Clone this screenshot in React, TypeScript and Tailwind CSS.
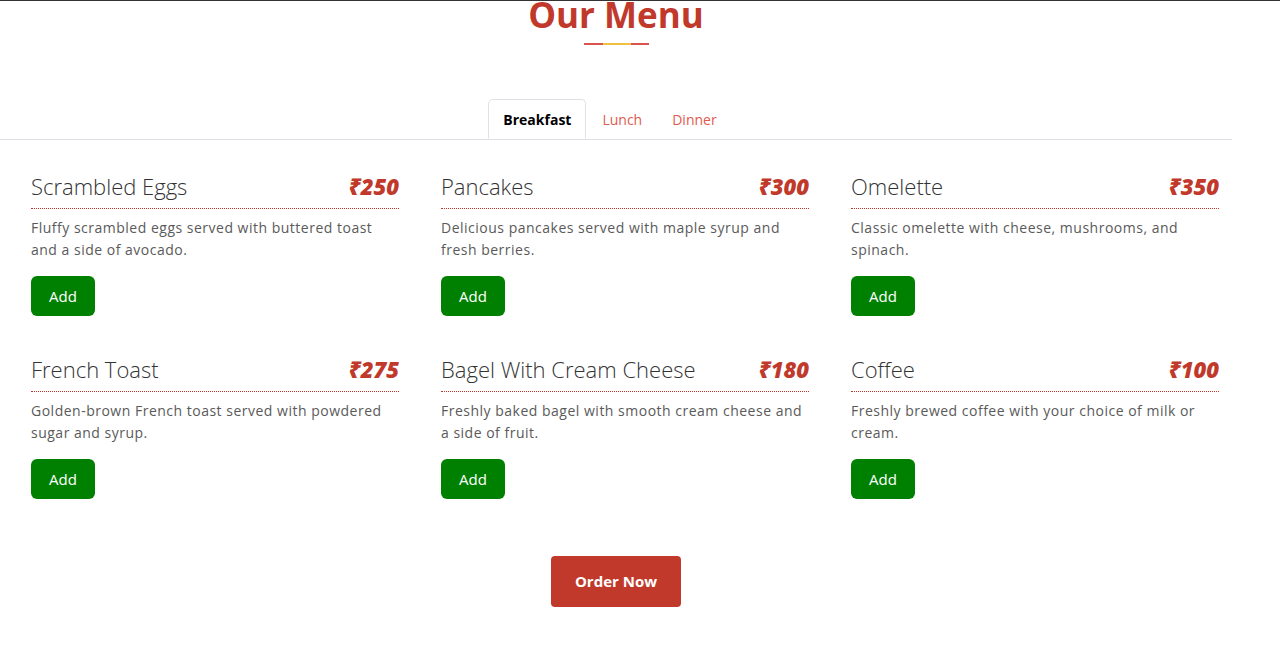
const items = [
  { name: "Scrambled Eggs", price: 250, desc: "Fluffy scrambled eggs served with buttered toast and a side of avocado." },
  { name: "Pancakes", price: 300, desc: "Delicious pancakes served with maple syrup and fresh berries." },
  { name: "Omelette", price: 350, desc: "Classic omelette with cheese, mushrooms, and spinach." },
  { name: "French Toast", price: 275, desc: "Golden-brown French toast served with powdered sugar and syrup." },
  { name: "Bagel With Cream Cheese", price: 180, desc: "Freshly baked bagel with smooth cream cheese and a side of fruit." },
  { name: "Coffee", price: 100, desc: "Freshly brewed coffee with your choice of milk or cream." },
];

function MenuItem({ name, price, desc }: { name: string; price: number; desc: string }) {
  return (
    <div className="flex flex-col">
      <div className="flex items-end justify-between border-b border-dotted border-[#c0392b] pb-[6px]">
        <h3 className="font-['Open_Sans',sans-serif] text-[22px] font-light leading-[32px] text-[#333]">{name}</h3>
        <span className="font-['Noto_Sans',sans-serif] text-[22px] font-black italic leading-[32px] text-[#c0392b]">
          ₹{price}
        </span>
      </div>
      <p className="mt-[8px] font-['Open_Sans',sans-serif] text-[14px] leading-[22px] tracking-[0.5px] text-[#5a5a5a]">
        {desc}
      </p>
      <div className="mt-[15px]">
        <button className="h-[40px] w-[64px] rounded-[6px] bg-[#008000] font-['Open_Sans',sans-serif] text-[15px] text-white">
          Add
        </button>
      </div>
    </div>
  );
}

export default function App() {
  return (
    <div className="min-h-[669px] w-[1280px] border-t border-[#333] bg-white">
      <div className="w-[1232px]">
        {/* Heading */}
        <div className="flex flex-col items-center">
          <h1 className="mt-[-8px] font-['Open_Sans',sans-serif] text-[35px] font-bold leading-[44px] text-[#c0392b]">
            Our Menu
          </h1>
          <div className="mt-[6px] flex h-[2px] w-[65px]">
            <div className="w-[19px] bg-[#d9534f]" />
            <div className="w-[28px] bg-[#f0c040]" />
            <div className="w-[18px] bg-[#d9534f]" />
          </div>
        </div>

        {/* Tabs */}
        <div className="mt-[54px] flex justify-center border-b border-[#dee2e6] pr-[13px]">
          <button className="-mb-px h-[40px] rounded-t-[5px] border border-[#dee2e6] border-b-white bg-white px-[14px] font-['Open_Sans',sans-serif] text-[14px] font-bold text-black">
            Breakfast
          </button>
          <button className="h-[40px] px-[16px] font-['Open_Sans',sans-serif] text-[14px] text-[#e05a50]">Lunch</button>
          <button className="h-[40px] px-[14px] font-['Open_Sans',sans-serif] text-[14px] text-[#e05a50]">Dinner</button>
        </div>

        {/* Items */}
        <div className="mt-[30px] grid grid-cols-[368px_368px_368px] gap-x-[42px] gap-y-[37px] pl-[31px]">
          {items.map((it) => (
            <MenuItem key={it.name} {...it} />
          ))}
        </div>

        <div className="mt-[57px] flex justify-center">
          <button className="h-[51px] w-[130px] rounded-[4px] bg-[#c0392b] font-['Open_Sans',sans-serif] text-[15px] font-bold text-white">
            Order Now
          </button>
        </div>
      </div>
    </div>
  );
}
